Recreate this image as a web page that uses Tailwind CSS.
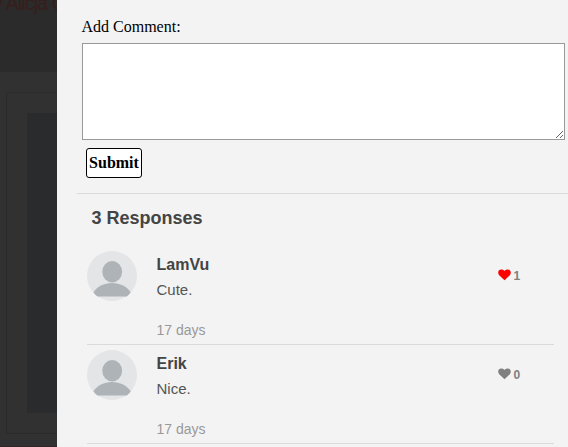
<!DOCTYPE html>
<html lang="en">
<head>
<meta charset="utf-8">
<title>Comments</title>
<script src="https://cdn.jsdelivr.net/npm/@tailwindcss/browser@4"></script>
</head>
<body class="flex h-[447px] w-[568px] overflow-hidden bg-[#313131] font-['Liberation_Sans',Arial,sans-serif]">
<svg class="hidden">
  <symbol id="avatar" viewBox="0 0 50 50">
    <circle cx="25" cy="25" r="25" fill="#e3e5e6"/>
    <ellipse cx="25.2" cy="20.7" rx="9.9" ry="10.7" fill="#adb3b7"/>
    <path d="M6.5 41.5C10 35.5 17 32 25 32s15 3.500 18.700 9.500Q41.500 44.200 39.800 45.500H10.500Q8.200 43.800 6.500 41.500Z" fill="#adb3b7"/>
  </symbol>
  <symbol id="heart" viewBox="0 0 13 12">
    <path d="M6.500 11.300L1.200 6.200C.5 5.400.2 4.600.2 3.700.2 1.700 1.400.5 3.300.5 4.700.5 5.700 1.100 6.500 1.900 7.300 1.100 8.300.5 9.700.5c1.900 0 3.100 1.200 3.100 3.200 0 .9-.3 1.700-1 2.500Z" fill="currentColor"/>
  </symbol>
</svg>
<aside class="flex h-full w-[57px] shrink-0 flex-col overflow-hidden">
  <div class="h-[72px] shrink-0 overflow-hidden bg-[#2b2b2b]">
    <div class="-mt-2 -ml-[7px] text-[20px] leading-[23px] tracking-[-1px] whitespace-nowrap text-[#371e1b]">y Alicja G</div>
  </div>
  <div class="mt-5 ml-[6px] h-[342px] w-[300px] shrink-0 border border-[#2a2a2a] p-5">
    <div class="h-[300px] bg-[#292b2d]"></div>
  </div>
  <div class="mt-3 h-px shrink-0 bg-[#302628]"></div>
</aside>
<main class="h-full w-[511px] shrink-0 bg-[#f3f3f3] pl-5">
  <form class="h-[194px] border-b border-[#dadada] pt-[17px] pl-[5px]">
    <label for="comment" class="-ml-[0.5px] block h-[26px] font-['Liberation_Serif',serif] text-[16px] leading-[19px] text-black">Add Comment:</label>
    <textarea id="comment" class="block h-[97px] w-[483px] resize border border-[#999] bg-white"></textarea>
    <button type="button" class="mt-2 ml-1 block h-[30px] w-[56px] rounded-[3px] border border-black bg-white text-center font-['Liberation_Serif',serif] text-[16px] leading-[28px] font-bold text-black">Submit</button>
  </form>
  <h2 class="h-[52px] pt-[14px] pl-[14.5px] text-[18px] leading-[21px] font-bold text-[#444]">3 Responses</h2>
  <article class="ml-[10px] flex h-[99px] w-[467px] border-b border-[#dadada] pt-[5px]">
    <svg class="size-[50px] shrink-0"><use href="#avatar"/></svg>
    <div class="ml-[19.5px] flex-1">
      <h3 class="mt-1 text-[16px] leading-[19px] font-bold text-[#444]">LamVu</h3>
      <p class="mt-[7px] text-[15px] leading-[17px] text-[#555]">Cute.</p>
      <p class="mt-[24px] text-[14px] leading-[16px] text-[#999]">17 days</p>
    </div>
    <div class="mt-[17px] flex w-[56.5px] text-[12px] leading-[16px] font-bold text-[#808080]">
      <svg class="mt-px h-[12px] w-[13px] shrink-0 text-[#ff0000]"><use href="#heart"/></svg><span class="ml-[3px]">1</span>
    </div>
  </article>
  <article class="ml-[10px] flex h-[99px] w-[467px] border-b border-[#dadada] pt-[5px]">
    <svg class="size-[50px] shrink-0"><use href="#avatar"/></svg>
    <div class="ml-[19.5px] flex-1">
      <h3 class="mt-1 text-[16px] leading-[19px] font-bold text-[#444]">Erik</h3>
      <p class="mt-[7px] text-[15px] leading-[17px] text-[#555]">Nice.</p>
      <p class="mt-[24px] text-[14px] leading-[16px] text-[#999]">17 days</p>
    </div>
    <div class="mt-[17px] flex w-[56.5px] text-[12px] leading-[16px] font-bold text-[#808080]">
      <svg class="mt-px h-[12px] w-[13px] shrink-0"><use href="#heart"/></svg><span class="ml-[3px]">0</span>
    </div>
  </article>
</main>
</body>
</html>
